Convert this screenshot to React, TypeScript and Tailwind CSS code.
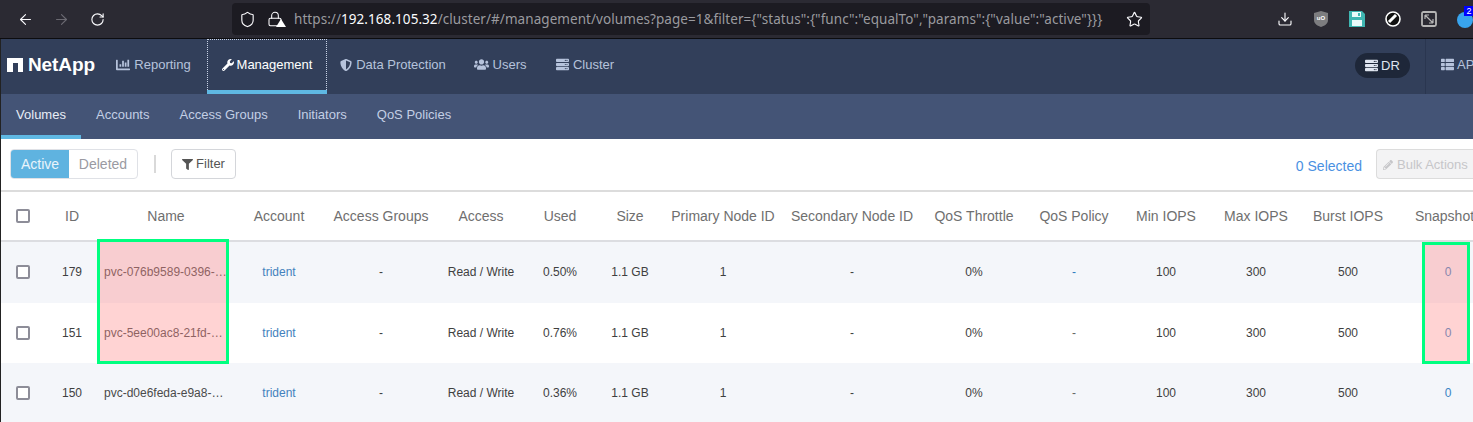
import React from "react";
import { ArrowLeft, ArrowRight, RotateCw, Star, Download, Shield, Lock } from "lucide-react";
import { FaChartBar, FaWrench, FaShieldAlt, FaUsers, FaServer, FaThList, FaFilter, FaPencilAlt } from "react-icons/fa";

const gridCols =
  "grid grid-cols-[44px_54px_134px_92px_112px_88px_70px_70px_116px_142px_102px_98px_86px_94px_90px_110px] w-[1502px] items-center text-center";

const headers = [
  "ID",
  "Name",
  "Account",
  "Access Groups",
  "Access",
  "Used",
  "Size",
  "Primary Node ID",
  "Secondary Node ID",
  "QoS Throttle",
  "QoS Policy",
  "Min IOPS",
  "Max IOPS",
  "Burst IOPS",
  "Snapshots",
];

const rows = [
  { id: "179", name: "pvc-076b9589-0396-…", used: "0.50%", policyLink: true },
  { id: "151", name: "pvc-5ee00ac8-21fd-…", used: "0.76%", policyLink: false },
  { id: "150", name: "pvc-d0e6feda-e9a8-…", used: "0.36%", policyLink: false },
];

const mainNav = [
  { label: "Reporting", icon: <FaChartBar size={14} />, w: "w-[107px]" },
  { label: "Data Protection", icon: <FaShieldAlt size={12} />, w: "w-[132px]" },
  { label: "Users", icon: <FaUsers size={15} />, w: "w-[82px]" },
  { label: "Cluster", icon: <FaServer size={13} />, w: "w-[88px]" },
];

const subNav = ["Accounts", "Access Groups", "Initiators", "QoS Policies"];

function Checkbox() {
  return <div className="mx-auto h-[14px] w-[14px] rounded-[2px] border-2 border-[#8d8d98] bg-white" />;
}

function BrowserBar() {
  return (
    <div className="flex h-[39px] items-center border-b border-[#0c0c0f] bg-[#2b2a33] text-[#fbfbfe]">
      <ArrowLeft size={17} className="ml-[17px] shrink-0" strokeWidth={1.6} />
      <ArrowRight size={17} className="ml-[19px] shrink-0 text-[#6b6a72]" strokeWidth={1.6} />
      <RotateCw size={15} className="ml-[20px] shrink-0" strokeWidth={1.8} />
      <div className="ml-[127px] flex h-[32px] w-[918px] shrink-0 items-center rounded-[4px] bg-[#1c1b22] pl-[7px]">
        <Shield size={17} strokeWidth={1.6} className="shrink-0" />
        <div className="relative ml-[11px] shrink-0">
          <Lock size={16} strokeWidth={1.6} />
          <div className="absolute bottom-[0px] right-[-3px] h-0 w-0 border-x-[5px] border-b-[8px] border-x-transparent border-b-white" />
        </div>
        <div className="ml-[11px] whitespace-nowrap font-['Noto_Sans',sans-serif] text-[13.5px] tracking-[0.06px] text-[#9a9a9f]">
          https://<span className="text-[#fbfbfe]">192.168.105.32</span>
          {'/cluster/#/management/volumes?page=1&filter={"status":{"func":"equalTo","params":{"value":"active"}}}'}
        </div>
        <Star size={17} strokeWidth={1.6} className="ml-auto mr-[7px] shrink-0" />
      </div>
      <Download size={16} strokeWidth={1.7} className="ml-[127px] shrink-0" />
      <svg width="16" height="18" viewBox="0 0 16 18" className="ml-[20px] shrink-0">
        <path d="M8 1l7 2v7c0 4-4 6-7 7-3-1-7-3-7-7V3z" fill="#7d7d80" />
        <text x="8" y="10" textAnchor="middle" fontSize="6" fontWeight="700" fill="#fff" fontFamily="Liberation Sans">
          uO
        </text>
      </svg>
      <svg width="16" height="16" viewBox="0 0 16 16" className="ml-[20px] shrink-0">
        <path d="M0 0h13l3 3v13H0z" fill="#3fb6b2" />
        <path d="M3 1h9v5H3zM3 9h10v6H3z" fill="#eafafa" />
        <path d="M9 2h2v3H9z" fill="#3fb6b2" />
      </svg>
      <svg width="16" height="16" viewBox="0 0 16 16" className="ml-[20px] shrink-0">
        <circle cx="8" cy="8" r="7" fill="#111" stroke="#fff" strokeWidth="1.6" />
        <path d="M4 11L11 4" stroke="#fff" strokeWidth="3" />
      </svg>
      <svg width="16" height="16" viewBox="0 0 16 16" className="ml-[20px] shrink-0">
        <rect x="1" y="1" width="14" height="14" rx="1.5" fill="none" stroke="#b5b5b5" strokeWidth="1.8" />
        <path d="M4 4l8 8M4 4h4M4 4v4M12 12H8M12 12V8" stroke="#b5b5b5" strokeWidth="1.2" fill="none" />
      </svg>
      <div className="relative ml-[20px] mt-[2px] h-[16px] w-[16px] shrink-0 rounded-full bg-[#38a4ee]">
        <div className="absolute left-[7px] top-[-6px] h-[10px] w-[10px] bg-[#0000ff] text-center font-['Liberation_Sans',sans-serif] text-[9px] leading-[10px] text-white">
          2
        </div>
      </div>
    </div>
  );
}

function NavItem({ icon, label, w }: { icon: React.ReactNode; label: string; w: string }) {
  return (
    <div className={`flex h-full ${w} items-center justify-center gap-[4px] pb-[4px] text-[13px] text-[#b6c3dc]`}>
      {icon}
      <span>{label}</span>
    </div>
  );
}

function MainNav() {
  return (
    <div className="flex h-[55px] items-center bg-[#323f5a]">
      <div className="mb-[3px] ml-[6px] flex w-[93px] items-center gap-[5px] text-[19px] font-bold tracking-[-0.1px] text-white">
        <svg width="16" height="14" viewBox="0 0 16 14" className="shrink-0">
          <path d="M0 0h16v14h-5V5H6v9H0z" fill="#fff" />
        </svg>
        NetApp
      </div>
      <NavItem {...mainNav[0]} />
      <div className="flex h-full w-[120px] flex-col">
        <div className="flex flex-1 items-center justify-center gap-[3px] border border-b-0 border-dotted border-[#c9d3e6] text-[13px] text-white">
          <FaWrench size={12} />
          Management
        </div>
        <div className="h-[4px] bg-[#5fb8e3]" />
      </div>
      <NavItem {...mainNav[1]} />
      <NavItem {...mainNav[2]} />
      <NavItem {...mainNav[3]} />
      <div className="mb-[2px] ml-auto mr-[15px] flex h-[25px] w-[55px] items-center justify-center gap-[3px] rounded-full bg-[#1e2739] text-[13px] text-[#dfe5f0]">
        <FaServer size={13} />
        DR
      </div>
      <div className="flex h-full w-[48px] shrink-0 items-center gap-[3px] overflow-hidden whitespace-nowrap border-l border-[#2a3650] pb-[4px] pl-[15px] text-[13px] text-[#b6c3dc]">
        <FaThList size={13} className="shrink-0" />
        API
      </div>
    </div>
  );
}

function SubNav() {
  return (
    <div className="flex h-[45px] bg-[#445476] text-[13px] text-[#c3cfe5]">
      <div className="flex w-[80px] flex-col">
        <div className="flex flex-1 items-center justify-center text-[#e8edf6]">Volumes</div>
        <div className="h-[4px] bg-[#5fb8e3]" />
      </div>
      <div className="flex gap-[30px] pb-[4px] pl-[15px]">
        {subNav.map((item) => (
          <div key={item} className="flex items-center">
            {item}
          </div>
        ))}
      </div>
    </div>
  );
}

function Toolbar() {
  return (
    <div className="flex h-[51px] items-center pb-[1px] pl-[9px] text-[13px]">
      <div className="flex h-[30px] overflow-hidden rounded-[4px] border border-[#dfe1e6]">
        <div className="flex w-[58px] items-center justify-center bg-[#5fb3e0] text-[14px] text-[#e9f4fb]">Active</div>
        <div className="flex w-[68px] items-center justify-center text-[14px] text-[#9a9aa2]">Deleted</div>
      </div>
      <div className="ml-[16px] h-[18px] w-[2px] bg-[#d9d9d9]" />
      <div className="ml-[15px] flex h-[30px] w-[65px] items-center justify-center gap-[3px] rounded-[4px] border border-[#d4d6da] text-[#555]">
        <FaFilter size={11} />
        Filter
      </div>
      <div className="ml-auto mr-[14px] pt-[4px] text-[14px] text-[#4a90e2]">0 Selected</div>
      <div className="flex h-[30px] w-[97px] shrink-0 items-center gap-[4px] overflow-hidden whitespace-nowrap rounded-l-[4px] border border-r-0 border-[#dcdcdc] bg-[#f3f3f4] pl-[6px] pt-[2px] text-[#c6c6c9]">
        <FaPencilAlt size={10} className="shrink-0" />
        Bulk Actions
      </div>
    </div>
  );
}

function VolumesTable() {
  return (
    <div className="border-t-2 border-[#dcdcdc]">
      <div className={`${gridCols} h-[50px] border-b-2 border-[#dcdde1] text-[14px] text-[#6f6f6f]`}>
        <Checkbox />
        {headers.map((h) => (
          <div key={h} className="whitespace-nowrap">
            {h}
          </div>
        ))}
      </div>
      {rows.map((row, i) => (
        <div
          key={row.id}
          className={`${gridCols} h-[60.5px] text-[12px] text-[#3f3f3f] ${i % 2 === 0 ? "bg-[#f4f6fa]" : "bg-white"}`}
        >
          <Checkbox />
          <div>{row.id}</div>
          <div className="whitespace-nowrap pl-[5px] text-left text-[#4a4a4a]">{row.name}</div>
          <div className="text-[#4482bd]">trident</div>
          <div>-</div>
          <div>Read / Write</div>
          <div>{row.used}</div>
          <div>1.1 GB</div>
          <div>1</div>
          <div>-</div>
          <div>0%</div>
          <div className={row.policyLink ? "text-[#2f7cc0]" : "text-[#666]"}>-</div>
          <div>100</div>
          <div>300</div>
          <div>500</div>
          <div className="text-[#3a84c4]">0</div>
        </div>
      ))}
    </div>
  );
}

export default function App() {
  return (
    <div className="relative h-[422px] w-[1473px] overflow-hidden bg-white font-['Liberation_Sans',Arial,sans-serif]">
      <BrowserBar />
      <div className="border-l border-[#222]">
        <MainNav />
        <SubNav />
        <Toolbar />
        <VolumesTable />
      </div>
      {/* green annotation boxes over the screenshot */}
      <div className="absolute left-[97px] top-[239px] h-[125px] w-[132px] border-[3px] border-[#00ff80] bg-[rgba(255,140,140,0.38)]" />
      <div className="absolute left-[1422px] top-[242px] h-[122px] w-[48px] border-[3px] border-[#00ff80] bg-[rgba(255,140,140,0.38)]" />
    </div>
  );
}
